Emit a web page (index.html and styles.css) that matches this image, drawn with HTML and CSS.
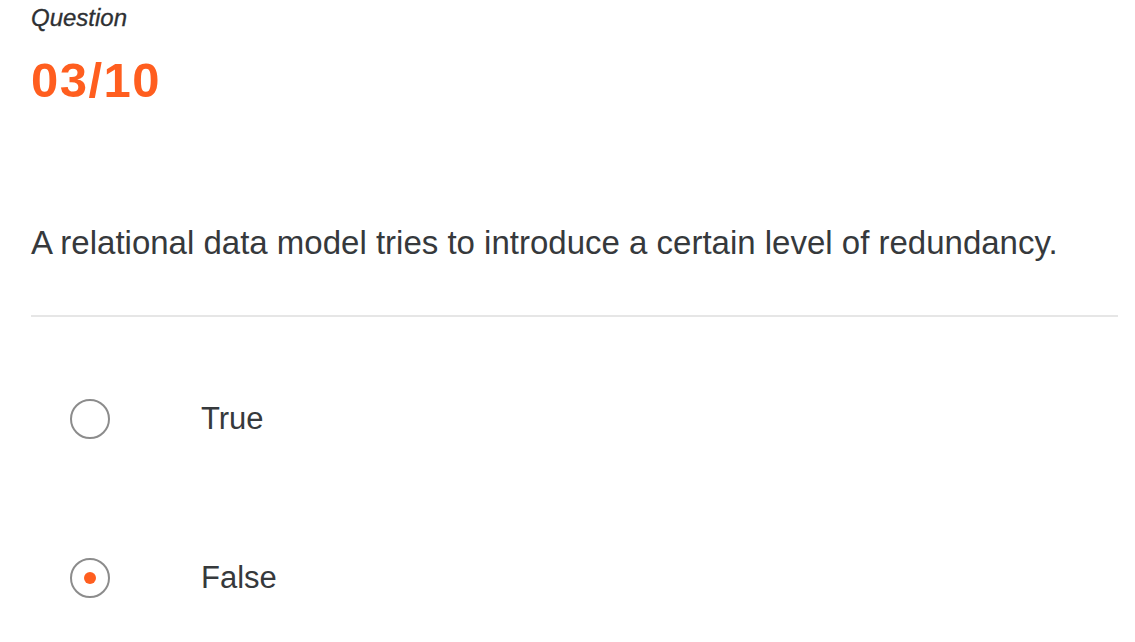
FILE: index.html
```html
<!DOCTYPE html>
<html lang="en">
<head>
<meta charset="utf-8">
<title>Quiz</title>
<link rel="stylesheet" href="styles.css">
</head>
<body>
<main class="quiz">
  <header class="quiz-head">
    <p class="label">Question</p>
    <p class="counter">03/10</p>
  </header>
  <h1 class="prompt">A relational data model tries to introduce a certain level of redundancy.</h1>
  <hr class="divider">
  <ul class="options">
    <li class="option">
      <span class="radio"></span>
      <span class="option-text">True</span>
    </li>
    <li class="option">
      <span class="radio checked"></span>
      <span class="option-text">False</span>
    </li>
  </ul>
</main>
</body>
</html>
```

FILE: styles.css
```css
* { box-sizing: border-box; }
html, body { margin: 0; padding: 0; background: #fff; }
body {
  font-family: "Liberation Sans", Arial, sans-serif;
  color: #36393c;
}
.quiz {
  padding: 0 17px 0 31px;
}
.quiz-head {
  display: flex;
  flex-direction: column;
}
.label {
  margin: 3px 0 0;
  font-size: 24px;
  font-style: italic;
  line-height: 30px;
  color: #2e3033;
  -webkit-text-stroke: 0.3px #2e3033;
}
.counter {
  margin: 20px 0 0;
  font-size: 49px;
  font-weight: bold;
  line-height: 54px;
  letter-spacing: 1.5px;
  color: #ff5e1f;
}
.prompt {
  margin: 116px 0 0;
  font-size: 33px;
  font-weight: normal;
  line-height: 40px;
  color: #36393c;
}
.divider {
  margin: 52px 0 0;
  border: 0;
  height: 2px;
  background: #e6e6e6;
}
.options {
  list-style: none;
  margin: 82px 0 0;
  padding: 0 0 0 39px;
  display: flex;
  flex-direction: column;
  gap: 119px;
}
.option {
  display: flex;
  align-items: center;
  height: 40px;
}
.radio {
  width: 40px;
  height: 40px;
  border: 2px solid #8c8c8c;
  border-radius: 50%;
  display: flex;
  align-items: center;
  justify-content: center;
  flex: none;
}
.radio.checked::after {
  content: "";
  width: 12px;
  height: 12px;
  border-radius: 50%;
  background: #ff5e1f;
}
.option-text {
  margin-left: 91px;
  font-size: 31px;
  line-height: 40px;
  color: #36393c;
}
```
